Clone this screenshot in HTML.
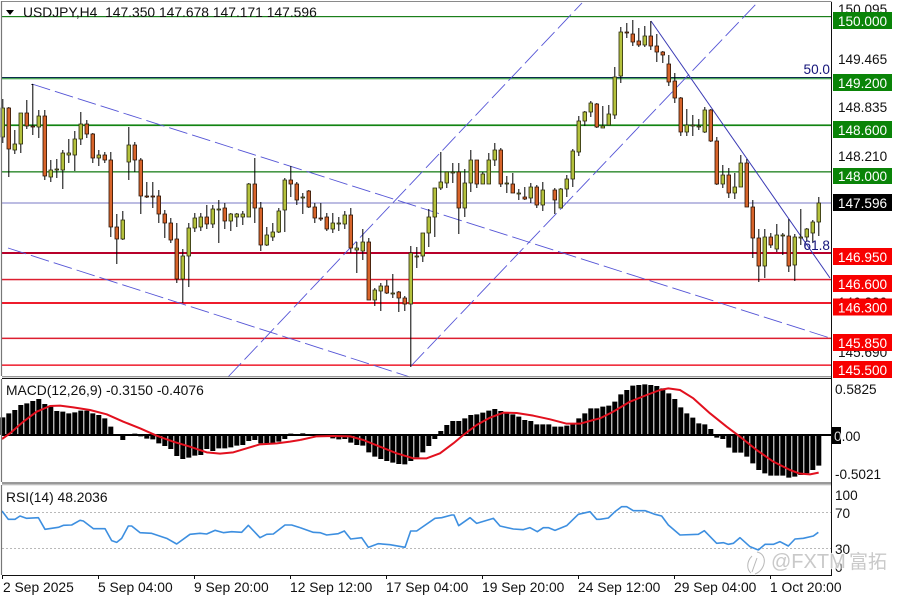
<!DOCTYPE html>
<html><head><meta charset="utf-8"><style>
html,body{margin:0;padding:0;background:#fff;width:900px;height:600px;overflow:hidden}
svg{display:block}
text{font-family:"Liberation Sans","Noto Sans CJK SC",sans-serif;font-size:13.6px;fill:#111;white-space:pre}
.t{fill:#fff;text-anchor:middle}
.h{font-size:13.85px}
.n{vector-effect:non-scaling-stroke;fill:none}
</style></head><body>
<svg width="900" height="600" viewBox="0 0 900 600" xmlns="http://www.w3.org/2000/svg">
<rect width="900" height="600" fill="#fff"/>

<!-- horizontal levels -->
<rect x="2" y="16" width="829" height="1.2" fill="#1b7f1b"/>
<rect x="2" y="77" width="829" height="1.2" fill="#0b2c4c"/>
<rect x="2" y="78.2" width="829" height="1.1" fill="#3aa844"/>
<rect x="2" y="124.4" width="829" height="1.7" fill="#128412"/>
<rect x="2" y="171.2" width="829" height="1.3" fill="#1b7f1b"/>
<rect x="2" y="202.5" width="829" height="1" fill="#7a7ac4"/>
<rect x="2" y="252" width="829" height="2" fill="#b8002a"/>
<rect x="2" y="278.8" width="829" height="1.5" fill="#dd1f30"/>
<rect x="2" y="302" width="829" height="2" fill="#ee1c2c"/>
<rect x="2" y="337.6" width="829" height="1.5" fill="#dd1f30"/>
<rect x="2" y="364.4" width="829" height="1.5" fill="#ee1c2c"/>

<!-- channels -->
<g stroke="#5555d6" stroke-width=".9" stroke-dasharray="19 5" fill="none">
<path d="M32 84L830 338"/>
<path d="M8 248L410 377"/>
<path d="M228 377L582 3"/>
<path d="M411 366L757 3"/>
</g>
<path d="M651 21L830 278" stroke="#3a3ab4" stroke-width="1" fill="none"/>
<path d="M32 84V85" stroke="#000" fill="none"/>

<!-- wicks -->
<path stroke="#000" stroke-width="1" fill="none" d="M2.8 99V143M8.8 107V177M14.8 130V154M20.8 113V153M26.8 100V129M32.8 84V135M38.8 110V138M44.8 110V180M50.8 160V182M56.8 159V178M62.8 150V189M68.8 139V163M74.8 131V171M80.8 112V145M86.8 120V138M92.8 133V163M98.8 150V166M104.8 152V163M110.8 152V237M116.8 214V264M122.8 211V240M128.8 127V180M134.8 142V172M140.8 158V214M146.8 182V198M152.8 182V208M158.8 190V223M164.8 210V238M170.8 218V243M176.8 223V283M182.8 249V303M188.8 223V287M194.8 213V232M200.8 213V231M206.8 205V229M212.8 205V228M218.8 200V243M224.8 203V229M230.8 213V231M236.8 213V227M242.8 211V225M248.8 183V217M254.8 158V223M260.8 202V251M266.8 227V246M272.8 223V241M278.8 208V233M284.8 178V232M290.8 166V197M296.8 182V205M302.8 193V214M308.8 190V208M314.8 203V223M320.8 203V221M326.8 213V231M332.8 213V233M338.8 217V231M344.8 211V229M350.8 208V253M356.8 242V273M362.8 229V260M368.8 238V300M374.8 288V306M380.8 283V311M386.8 280V294M392.8 274V298M398.8 291V312M404.8 296V311M410.8 246V367M416.8 247V268M422.8 233V262M428.8 209V247M434.8 188V237M440.8 152V190M446.8 172V188M452.8 163V183M458.8 163V234M464.8 169V217M470.8 150V192M476.8 160V188M482.8 172V184M488.8 153V184M494.8 143V166M500.8 148V187M506.8 176V193M512.8 173V193M518.8 189V200M524.8 187V200M530.8 183V203M536.8 185V208M542.8 182V211M554.8 188V214M560.8 188V208M566.8 175V197M572.8 149V187M578.8 116V156M584.8 111V126M590.8 101V117M596.8 103V128M602.8 106V128M608.8 105V125M614.8 67V119M620.8 27V83M626.8 23V38M632.8 20V46M638.8 28V47M644.8 26V47M650.8 21V50M656.8 34V62M662.8 51V63M668.8 55V86M674.8 73V103M680.8 97V136M686.8 109V136M692.8 115V136M698.8 119V130M704.8 107V133M710.8 109V142M716.8 137V185M722.8 165V188M728.8 168V198M734.8 173V199M740.8 155V187M746.8 159V207M752.8 200V258M758.8 229V282M764.8 229V278M770.8 233V248M776.8 224V252M782.8 233V255M788.8 219V272M794.8 234V281M800.8 209V245M806.8 228V241M812.8 220V243M818.8 197V236"/>

<!-- bull bodies -->
<path fill="#b4c13c" stroke="#2a2a10" stroke-width=".8" d="M1 108h3.6v29h-3.6zM13 144h3.6v6h-3.6zM19 113h3.6v31h-3.6zM37 116h3.6v11h-3.6zM49 170h3.6v7h-3.6zM55 169h3.6v1h-3.6zM61 153h3.6v17h-3.6zM67 153h3.6v2h-3.6zM73 139h3.6v16h-3.6zM79 124h3.6v15h-3.6zM97 155h3.6v3h-3.6zM121 220h3.6v19h-3.6zM127 145h3.6v17h-3.6zM181 256h3.6v23h-3.6zM187 228h3.6v28h-3.6zM193 218h3.6v10h-3.6zM199 217h3.6v10h-3.6zM211 209h3.6v15h-3.6zM217 209h3.6v1h-3.6zM229 214h3.6v7h-3.6zM235 214h3.6v3h-3.6zM241 214h3.6v3h-3.6zM247 184h3.6v33h-3.6zM265 235h3.6v10h-3.6zM271 232h3.6v5h-3.6zM277 211h3.6v21h-3.6zM283 180h3.6v30h-3.6zM301 197h3.6v1h-3.6zM331 223h3.6v6h-3.6zM337 223h3.6v1h-3.6zM343 215h3.6v9h-3.6zM355 248h3.6v2h-3.6zM361 242h3.6v9h-3.6zM373 290h3.6v10h-3.6zM379 286h3.6v5h-3.6zM391 293h3.6v1h-3.6zM409 253h3.6v51h-3.6zM415 256h3.6v1h-3.6zM421 233h3.6v23h-3.6zM427 217h3.6v16h-3.6zM433 188h3.6v29h-3.6zM439 182h3.6v6h-3.6zM445 172h3.6v11h-3.6zM451 172h3.6v1h-3.6zM463 183h3.6v25h-3.6zM469 160h3.6v23h-3.6zM481 174h3.6v10h-3.6zM487 160h3.6v24h-3.6zM493 150h3.6v10h-3.6zM505 183h3.6v1h-3.6zM517 193h3.6v1h-3.6zM529 187h3.6v11h-3.6zM541 190h3.6v15h-3.6zM559 189h3.6v19h-3.6zM565 179h3.6v10h-3.6zM571 151h3.6v28h-3.6zM577 121h3.6v31h-3.6zM583 112h3.6v9h-3.6zM589 103h3.6v9h-3.6zM601 126h3.6v2h-3.6zM607 114h3.6v11h-3.6zM613 77h3.6v38h-3.6zM619 32h3.6v44h-3.6zM643 36h3.6v9h-3.6zM685 125h3.6v7h-3.6zM691 125h3.6v1h-3.6zM697 126h3.6v1h-3.6zM703 110h3.6v22h-3.6zM721 175h3.6v9h-3.6zM733 187h3.6v6h-3.6zM739 163h3.6v24h-3.6zM763 237h3.6v29h-3.6zM775 235h3.6v14h-3.6zM781 235h3.6v1h-3.6zM793 237h3.6v28h-3.6zM799 237h3.6v1h-3.6zM805 229h3.6v8h-3.6zM811 222h3.6v11h-3.6zM817 203h3.6v19h-3.6z"/>
<!-- bear bodies -->
<path fill="#d8642a" stroke="#2a1408" stroke-width=".8" d="M7 108h3.6v41h-3.6zM25 113h3.6v13h-3.6zM31 126h3.6v1h-3.6zM43 116h3.6v60h-3.6zM85 124h3.6v10h-3.6zM91 134h3.6v24h-3.6zM103 155h3.6v5h-3.6zM109 160h3.6v67h-3.6zM115 227h3.6v12h-3.6zM133 145h3.6v15h-3.6zM139 160h3.6v36h-3.6zM145 196h3.6v1h-3.6zM151 196h3.6v1h-3.6zM157 196h3.6v18h-3.6zM163 214h3.6v9h-3.6zM169 223h3.6v17h-3.6zM175 239h3.6v40h-3.6zM205 217h3.6v7h-3.6zM223 208h3.6v13h-3.6zM253 184h3.6v24h-3.6zM259 208h3.6v37h-3.6zM289 180h3.6v4h-3.6zM295 184h3.6v16h-3.6zM307 191h3.6v16h-3.6zM313 207h3.6v11h-3.6zM319 218h3.6v1h-3.6zM325 217h3.6v12h-3.6zM349 215h3.6v33h-3.6zM367 242h3.6v58h-3.6zM385 286h3.6v7h-3.6zM397 292h3.6v6h-3.6zM403 298h3.6v6h-3.6zM457 172h3.6v36h-3.6zM475 160h3.6v24h-3.6zM499 150h3.6v34h-3.6zM511 184h3.6v9h-3.6zM523 197h3.6v2h-3.6zM535 187h3.6v18h-3.6zM553 190h3.6v10h-3.6zM595 104h3.6v23h-3.6zM625 32h3.6v1h-3.6zM631 34h3.6v8h-3.6zM637 41h3.6v4h-3.6zM649 36h3.6v10h-3.6zM655 46h3.6v6h-3.6zM661 52h3.6v3h-3.6zM667 64h3.6v18h-3.6zM673 81h3.6v17h-3.6zM679 98h3.6v34h-3.6zM709 110h3.6v31h-3.6zM715 141h3.6v43h-3.6zM727 175h3.6v18h-3.6zM745 163h3.6v44h-3.6zM751 207h3.6v31h-3.6zM757 238h3.6v28h-3.6zM769 237h3.6v8h-3.6zM787 236h3.6v30h-3.6z"/>

<!-- Fibo labels -->
<text x="830" y="74" text-anchor="end" style="fill:#14147a">50.0</text>
<text x="830" y="250" text-anchor="end" style="fill:#14147a">61.8</text>

<!-- MACD histogram (y in 3x units, offset 375) -->
<g transform="translate(0,375) scale(1,.33333)">
<path stroke="#000" stroke-width="5" fill="none" d="M2.8 180V127M8.8 180V115M14.8 180V105M20.8 180V90M26.8 180V85M32.8 180V78M38.8 180V72M44.8 180V87M50.8 180V95M56.8 180V108M62.8 180V110M68.8 180V115M74.8 180V112M80.8 180V107M86.8 180V107M92.8 180V115M98.8 180V120M104.8 180V130M110.8 180V155M116.8 180V178M122.8 180V195M134.8 180V176M140.8 180V184M146.8 180V191M152.8 180V193M158.8 180V205M164.8 180V213M170.8 180V222M176.8 180V243M182.8 180V252M188.8 180V248M194.8 180V242M200.8 180V240M206.8 180V222M212.8 180V228M218.8 180V220M224.8 180V220M230.8 180V217M236.8 180V212M242.8 180V210M248.8 180V198M254.8 180V195M260.8 180V205M266.8 180V205M272.8 180V205M278.8 180V200M284.8 180V192M290.8 180V176M296.8 180V178M302.8 180V175M308.8 180V178M326.8 180V183M332.8 180V190M338.8 180V193M344.8 180V192M350.8 180V203M356.8 180V210M362.8 180V212M368.8 180V232M374.8 180V245M380.8 180V252M386.8 180V258M392.8 180V263M398.8 180V267M404.8 180V268M410.8 180V258M416.8 180V247M422.8 180V232M428.8 180V213M434.8 180V192M440.8 180V168M446.8 180V150M452.8 180V138M458.8 180V138M464.8 180V130M470.8 180V120M476.8 180V118M482.8 180V113M488.8 180V107M494.8 180V102M500.8 180V108M506.8 180V115M512.8 180V118M518.8 180V125M524.8 180V135M530.8 180V138M536.8 180V148M542.8 180V148M548.8 180V148M554.8 180V155M560.8 180V155M566.8 180V152M572.8 180V148M578.8 180V130M584.8 180V115M590.8 180V100M596.8 180V100M602.8 180V95M608.8 180V92M614.8 180V80M620.8 180V58M626.8 180V45M632.8 180V32M638.8 180V30M644.8 180V28M650.8 180V30M656.8 180V33M662.8 180V40M668.8 180V55M674.8 180V72M680.8 180V97M686.8 180V115M692.8 180V128M698.8 180V145M704.8 180V148M710.8 180V162M716.8 180V188M722.8 180V192M728.8 180V218M734.8 180V233M740.8 180V233M746.8 180V245M752.8 180V265M758.8 180V285M764.8 180V295M770.8 180V302M776.8 180V302M782.8 180V302M788.8 180V308M794.8 180V305M800.8 180V300M806.8 180V295M812.8 180V285M818.8 180V272"/>
</g>
<rect x="2" y="434" width="839" height="2" fill="#000"/>

<!-- MACD signal -->
<g stroke="#e2101e" stroke-width="2" stroke-linejoin="round">
<polyline class="n" transform="translate(0,375) scale(.33333)" points="6,192 30,175 70,140 110,110 150,93 180,92 220,97 270,105 320,118 370,140 420,160 470,182 520,200 570,215 620,232 660,236 700,232 740,220 780,208 830,205 870,200 900,195"/>
<polyline class="n" transform="translate(300,375) scale(.33333)" points="0,195 50,184 100,183 150,184 190,195 240,215 290,235 340,250 380,250 420,235 460,205 490,180 530,150 570,128 610,113 650,114 700,122 750,133 800,146 840,146 880,135 900,130"/>
<polyline class="n" transform="translate(600,375) scale(.33333)" points="0,130 40,110 90,80 140,60 180,45 205,40 240,45 280,70 330,115 380,155 420,185 470,225 520,260 570,285 600,296 630,298 656,293"/>
</g>

<!-- RSI levels -->
<path d="M2 512.5H831M2 548.5H831" stroke="#b9b9b9" stroke-width="1" stroke-dasharray="2 2" fill="none"/>
<!-- RSI -->
<g stroke="#3d8fe0" stroke-width="1.6" stroke-linejoin="round">
<polyline class="n" transform="translate(0,375) scale(.33333)" points="6,408 25,433 45,433 60,423 80,430 115,428 135,463 175,457 190,451 215,450 240,436 250,438 280,461 315,461 335,497 350,502 365,490 385,453 395,453 420,473 455,475 500,490 530,507 570,478 600,475 620,477 645,466 670,473 695,470 725,472 745,451 780,488 800,478 820,477 855,450 875,450 900,458"/>
<polyline class="n" transform="translate(300,375) scale(.33333)" points="0,458 40,472 60,473 80,480 115,476 133,468 152,492 185,488 205,517 235,506 270,509 315,517 332,468 350,468 405,430 425,428 455,420 462,420 476,452 510,428 530,445 580,430 600,453 640,462 670,464 690,458 712,470 730,458 745,458 765,466 800,452 835,418 870,410 890,433 900,433"/>
<polyline class="n" transform="translate(600,375) scale(.33333)" points="0,433 25,429 45,410 65,395 80,395 100,407 135,407 165,418 185,423 205,450 240,480 295,478 313,467 350,505 370,503 385,508 400,505 420,488 450,515 475,525 495,508 520,508 540,500 565,513 585,492 610,490 640,483 655,472"/>
</g>

<!-- frame -->
<path d="M1.5 1.5H831.5" stroke="#8a8a8a" stroke-width="1" fill="none"/>
<path d="M1.5 1V376M1.5 379V482M1.5 485V575" stroke="#777" stroke-width="1.2" fill="none"/>
<path d="M2 376.7H832" stroke="#777" stroke-width="1" fill="none"/>
<path d="M2 378.5H832" stroke="#111" stroke-width="1" fill="none"/>
<path d="M2 483H832" stroke="#333" stroke-width="1" fill="none"/>
<path d="M2 484.7H832" stroke="#aaa" stroke-width="1" fill="none"/>
<path d="M2 575.5H832" stroke="#111" stroke-width="1" fill="none"/>
<path d="M831.5 2V576" stroke="#111" stroke-width="1" fill="none"/>

<!-- axis ticks -->
<path d="M2.5 576V579M98.5 576V579M194.5 576V579M290.5 576V579M386.5 576V579M482.5 576V579M578.5 576V579M674.5 576V579M770.5 576V579" stroke="#111" fill="none"/>

<!-- header -->
<path d="M6 10H14L10 15Z" fill="#000"/>
<text class="h" x="23" y="17">USDJPY,H4  147.350 147.678 147.171 147.596</text>
<text class="h" x="6" y="395">MACD(12,26,9) -0.3150 -0.4076</text>
<text class="h" x="6" y="502">RSI(14) 48.2036</text>

<!-- right axis -->
<text x="838" y="14">150.095</text>
<text x="838" y="64">149.465</text>
<text x="838" y="112">148.835</text>
<text x="838" y="161">148.210</text>
<text x="838" y="307">146.320</text>
<text x="838" y="357">145.690</text>

<g>
<rect x="833" y="12" width="59" height="17" fill="#0a8408"/><text class="t" x="862.5" y="26">150.000</text>
<rect x="833" y="74" width="59" height="17" fill="#0a8408"/><text class="t" x="862.5" y="88">149.200</text>
<rect x="833" y="121" width="59" height="17" fill="#0a8408"/><text class="t" x="862.5" y="135">148.600</text>
<rect x="833" y="168" width="59" height="16" fill="#0a8408"/><text class="t" x="862.5" y="181">148.000</text>
<rect x="833" y="194" width="59" height="17" fill="#000"/><text class="t" x="862.5" y="208">147.596</text>
<rect x="833" y="248" width="59" height="17" fill="#f80000"/><text class="t" x="862.5" y="262">146.950</text>
<rect x="833" y="275" width="59" height="17" fill="#f80000"/><text class="t" x="862.5" y="289">146.600</text>
<rect x="833" y="298.5" width="59" height="17" fill="#f80000"/><text class="t" x="862.5" y="312.5">146.300</text>
<rect x="833" y="334" width="59" height="17" fill="#f80000"/><text class="t" x="862.5" y="348">145.850</text>
<rect x="833" y="361" width="59" height="17" fill="#f80000"/><text class="t" x="862.5" y="375">145.500</text>
</g>

<text x="835" y="394">0.5825</text>
<rect x="832" y="427" width="9" height="17" fill="#000"/>
<text x="834" y="441"><tspan style="fill:#ddd">0</tspan>.00</text>
<text x="835" y="479">-0.5021</text>
<text x="835" y="500">100</text>
<text x="835" y="518">70</text>
<text x="835" y="554">30</text>
<text x="835" y="572">0</text>

<!-- time axis -->
<text class="h" x="3" y="592">2 Sep 2025</text>
<text class="h" x="98" y="592">5 Sep 04:00</text>
<text class="h" x="194" y="592">9 Sep 20:00</text>
<text class="h" x="290" y="592">12 Sep 12:00</text>
<text class="h" x="386" y="592">17 Sep 04:00</text>
<text class="h" x="482" y="592">19 Sep 20:00</text>
<text class="h" x="578" y="592">24 Sep 12:00</text>
<text class="h" x="674" y="592">29 Sep 04:00</text>
<text class="h" x="770" y="592">1 Oct 20:00</text>

<!-- watermark -->
<g fill="none" stroke="#fff" stroke-width="3" opacity=".75">
<path d="M757 552C768 554 766 570 755 574M752 556C746 562 747 570 751 573M757 558L752 572"/>
</g>
<g fill="none" stroke="#b8b8b8" stroke-width="1">
<path d="M757 552C768 554 766 570 755 574M752 556C746 562 747 570 751 573M757 558L752 572"/>
</g>
<text x="771" y="568" style="font-size:20px;fill:#c9c9c9;stroke:#fff;stroke-width:2.2px;paint-order:stroke;stroke-opacity:.8">@FXTM</text>
<text x="849" y="568" style="font-size:19px;fill:#c9c9c9;stroke:#fff;stroke-width:2px;paint-order:stroke;stroke-opacity:.8">富拓</text>
</svg>
</body></html>
